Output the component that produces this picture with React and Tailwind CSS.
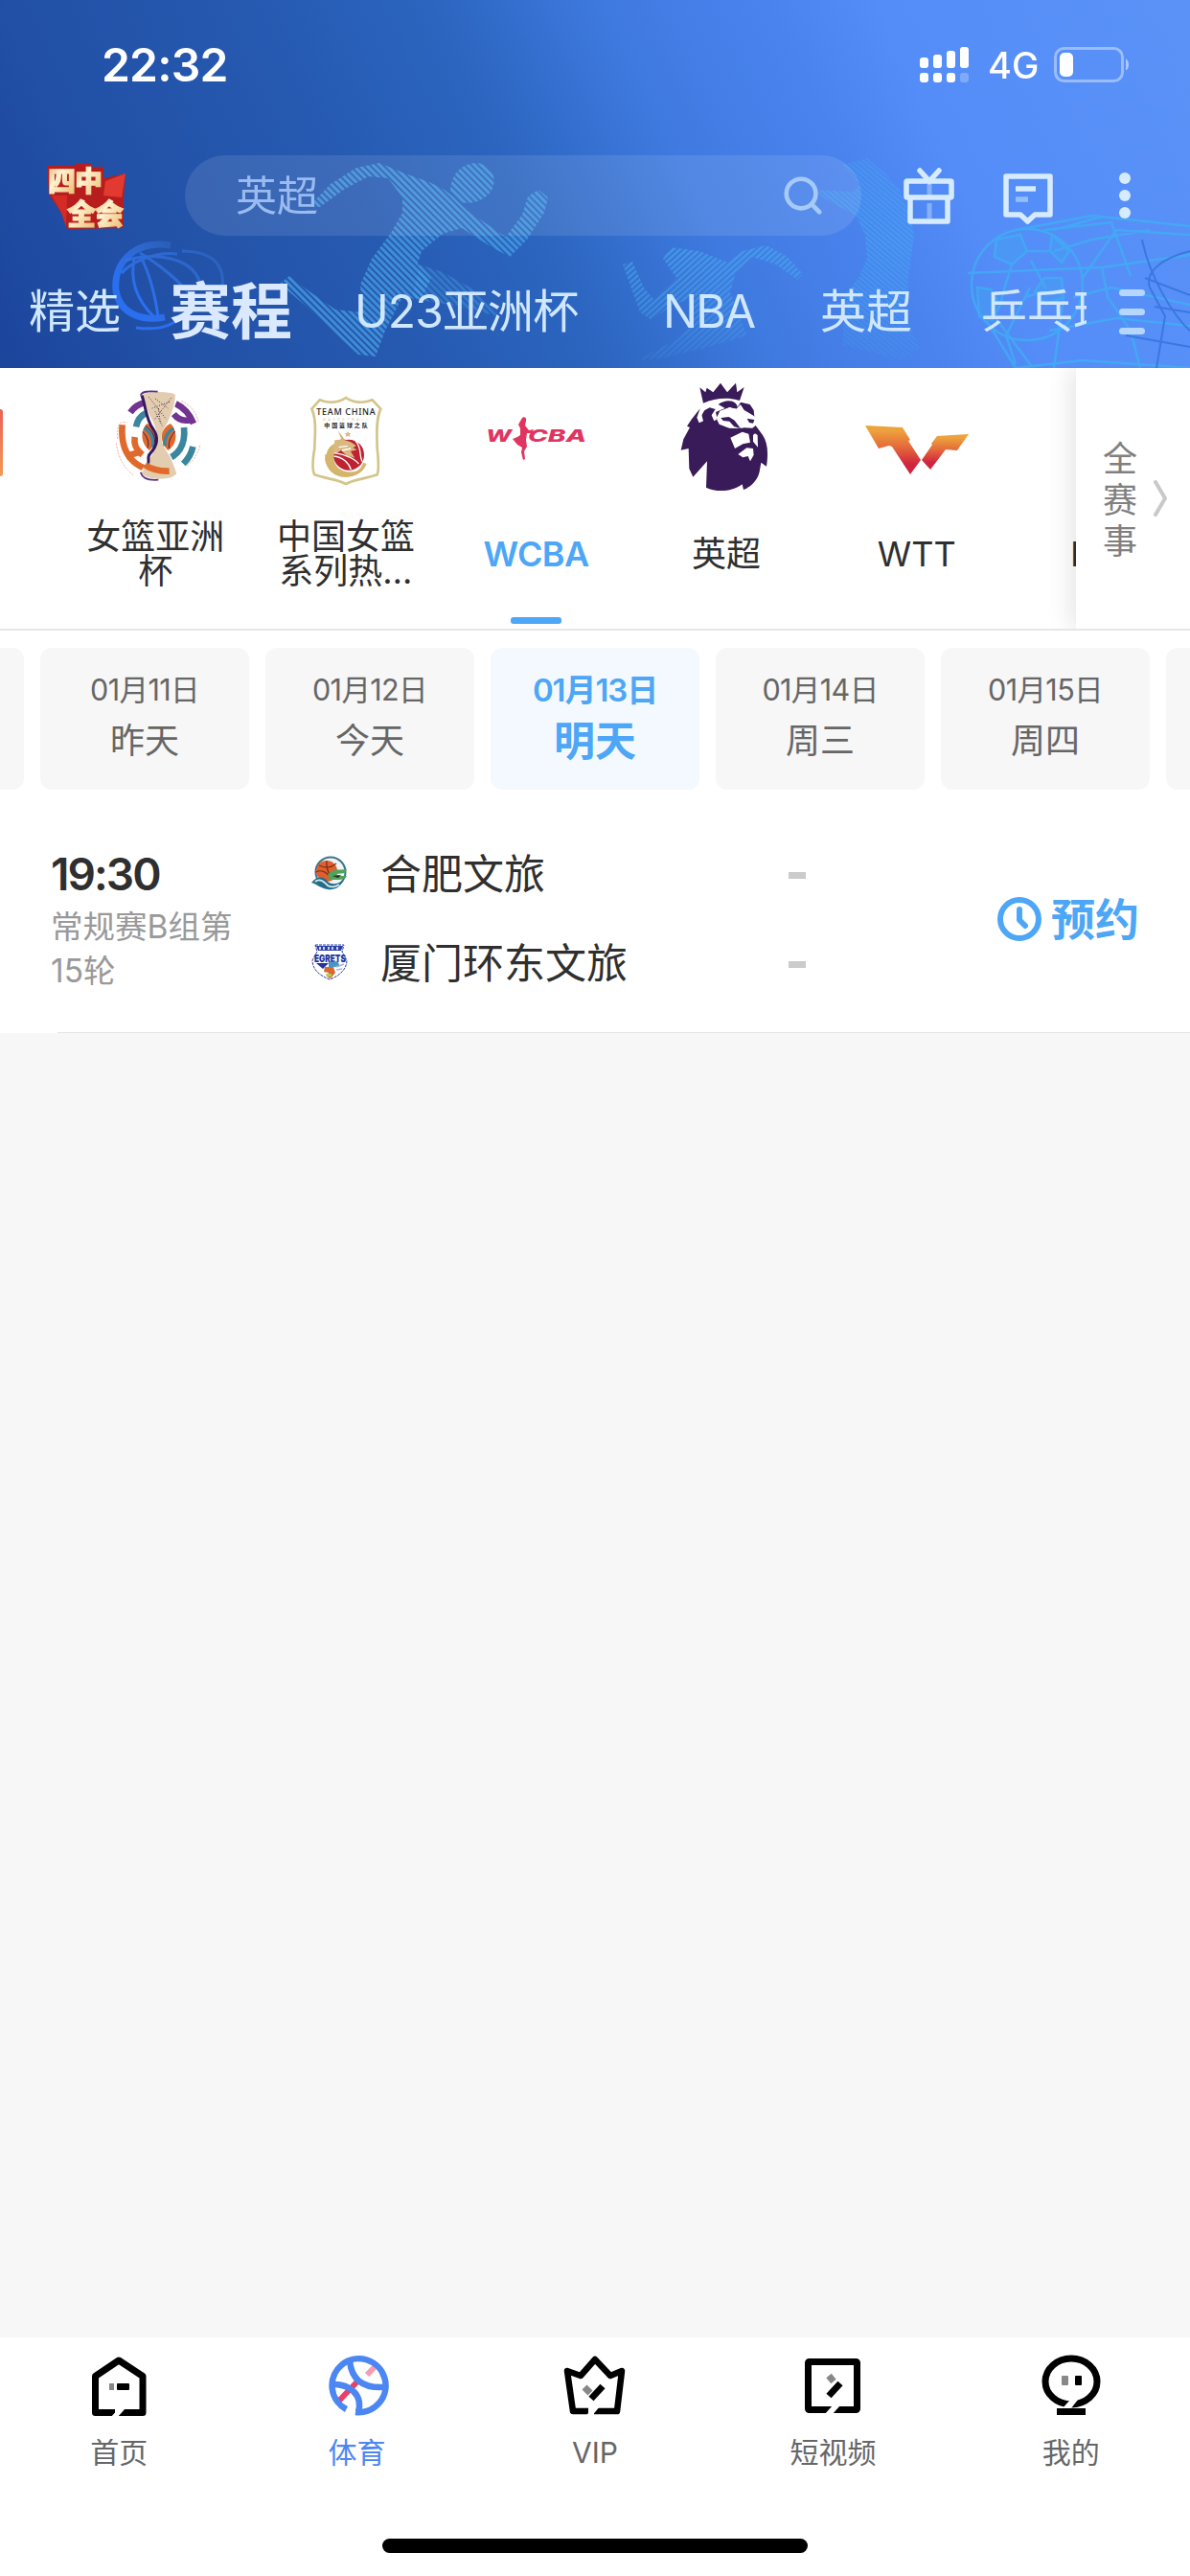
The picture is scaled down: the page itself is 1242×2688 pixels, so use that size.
import { Search } from "lucide-react";

const leagues = [
  { id: "asia", lines: ["女篮亚洲", "杯"], Logo: AsiaCupLogo },
  { id: "china", lines: ["中国女篮", "系列热…"], Logo: TeamChinaLogo },
  { id: "wcba", lines: ["WCBA"], Logo: WcbaLogo, active: true },
  { id: "epl", lines: ["英超"], Logo: LionLogo },
  { id: "wtt", lines: ["WTT"], Logo: WttLogo },
];

const days = [
  { date: "01月11日", label: "昨天" },
  { date: "01月12日", label: "今天" },
  { date: "01月13日", label: "明天", active: true },
  { date: "01月14日", label: "周三" },
  { date: "01月15日", label: "周四" },
];

const teams = [
  { name: "合肥文旅", Badge: HefeiBadge },
  { name: "厦门环东文旅", Badge: XiamenBadge },
];

const navItems = [
  { label: "首页", Icon: HomeIcon },
  { label: "体育", Icon: SportIcon, active: true },
  { label: "VIP", Icon: VipIcon },
  { label: "短视频", Icon: ShortVideoIcon },
  { label: "我的", Icon: MineIcon },
];

function HeaderArt() {
  return (
    <svg className="absolute inset-0" width="1242" height="384" viewBox="0 0 1242 384" fill="none">
      <defs>
        <pattern id="down" width="8" height="5" patternUnits="userSpaceOnUse" patternTransform="rotate(45)">
          <rect width="8" height="3" fill="#4aa9ea" />
        </pattern>
        <pattern id="up" width="8" height="4.6" patternUnits="userSpaceOnUse" patternTransform="rotate(-42)">
          <rect width="8" height="2.6" fill="#46a6ee" />
        </pattern>
        <pattern id="fine" width="8" height="4" patternUnits="userSpaceOnUse" patternTransform="rotate(40)">
          <rect width="8" height="2.4" fill="#43a5f2" />
        </pattern>
        <linearGradient id="ballFade" x1="0" y1="1" x2="1" y2="0">
          <stop offset="0.3" stopColor="#2a6ff0" />
          <stop offset="1" stopColor="#3f80e8" stopOpacity="0.25" />
        </linearGradient>
        <linearGradient id="fade" x1="0" y1="165" x2="0" y2="380" gradientUnits="userSpaceOnUse">
          <stop offset="0" stopColor="#fff" stopOpacity="0.55" />
          <stop offset="0.4" stopColor="#fff" stopOpacity="0.85" />
          <stop offset="0.7" stopColor="#fff" stopOpacity="0.6" />
          <stop offset="1" stopColor="#fff" stopOpacity="0.15" />
        </linearGradient>
        <mask id="fadeMask" maskUnits="userSpaceOnUse" x="560" y="150" width="420" height="234">
          <rect x="560" y="150" width="420" height="234" fill="url(#fade)" />
        </mask>
      </defs>

      {/* basketball */}
      <g stroke="url(#ballFade)" strokeWidth="3">
        <path d="M178 256C140 250 118 275 121 303C124 325 145 336 172 331" strokeWidth="7" />
        <path d="M131 272C160 262 205 268 210 300M146 264C165 275 190 295 200 310M140 270C136 290 140 310 160 330M148 270C158 290 162 310 165 330M127 285C135 275 160 262 185 265M190 262C220 262 235 275 232 300M142 342C165 345 180 340 190 330" />
      </g>

      {/* runner */}
      <g fill="url(#down)" opacity="0.65">
        <path d="M322 216L345 192L372 175L396 170L420 180L448 190L462 197C475 205 480 214 492 223L528 247L545 224L551 205L562 198L572 206L568 222L550 250L532 268L510 256L482 238L462 244L440 262L436 275L450 290L440 312L420 310L402 345L392 372L374 370L350 348L320 320L292 296L302 288L320 302L350 323L378 326L376 297L388 270L408 243L420 222L420 206L405 186L385 184L360 197L334 216Z" />
        <path d="M470 200C470 182 482 170 498 170C512 172 519 184 514 197C508 208 494 214 480 211Z" />
      </g>
      <path d="M438 276L462 284L498 304L520 330L470 318L430 312Z" fill="url(#down)" opacity="0.35" />

      {/* second player */}
      <g mask="url(#fadeMask)">
        <g fill="url(#up)" opacity="0.85">
          <path d="M650 276L660 273L672 300L682 312L706 290L692 270L700 258L730 262L760 274L775 262L800 256L822 268L838 286L832 292L810 276L785 268L768 284L762 305L770 325L780 350L740 362L690 374L665 376L710 352L725 330L720 312L702 318L680 334L668 326Z" />
        </g>
        {/* tennis player */}
        <path d="M878 172L905 165L925 182L938 196L950 225L954 245L948 290L946 330L960 365L940 375L880 360L880 310L896 290L905 270L903 245L893 225L862 208L850 198L890 200L898 192Z" fill="url(#fine)" opacity="0.8" />
      </g>

      {/* football and net */}
      <g stroke="#3fb0f4" strokeWidth="2.5" opacity="0.75">
        <circle cx="1072" cy="297" r="58" />
        <path d="M1040 250L1065 245L1072 262L1056 276L1038 268Z M1090 290L1108 290L1110 310L1092 318L1080 304Z M1098 245L1116 262L1108 274L1096 262ZM1020 300L1034 302L1044 318L1036 334L1022 330Z" fill="#3fa8f4" fillOpacity="0.5" />
        <path d="M1010 285L1150 279L1242 266M1072 262L1096 262M1056 276L1048 302L1044 318M1070 310L1090 304M1030 335L1060 384L1130 376L1242 384M1038 330L1078 384M1075 300L1050 350L1060 380M1110 310L1100 384M1120 310L1160 300L1242 318M1060 240L1140 225L1242 236M1090 240L1160 232L1180 288M1130 290L1165 240L1242 245M1150 279L1156 310L1180 345L1190 384M1100 262L1140 250L1200 240M1095 345L1165 332L1242 340M1076 272L1092 302M1100 240L1150 226" />
      </g>
      <path d="M1242 262C1210 270 1195 285 1200 300L1216 330L1207 384M1205 320L1242 326M1195 290L1242 308M1175 350L1242 362M1192 250C1200 290 1225 330 1242 345" stroke="#3471dc" strokeWidth="2" opacity="0.8" />
    </svg>
  );
}

function StatusBar() {
  return (
    <div className="flex h-[135px] items-center justify-between pl-[106px] pr-[62px] text-white">
      <div className="text-[48px] font-semibold leading-none tracking-[-0.8px]">22:32</div>
      <div className="flex items-center">
        <svg width="52" height="38" viewBox="0 0 52 38" fill="#fff">
          <rect x="0" y="11" width="9" height="11" rx="3" />
          <rect x="14" y="8" width="9" height="14" rx="3" />
          <rect x="28" y="4" width="9" height="18" rx="3" />
          <rect x="42" y="0" width="9" height="22" rx="3" />
          <rect x="0" y="27" width="9" height="10" rx="3" />
          <rect x="14" y="27" width="9" height="10" rx="3" />
          <rect x="28" y="27" width="9" height="10" rx="3" />
          <rect x="42" y="27" width="9" height="10" rx="3" opacity="0.25" />
        </svg>
        <span className="ml-[19px] w-[52px] text-[38px] font-medium leading-none">4G</span>
        <svg className="ml-[17px]" width="80" height="38" viewBox="0 0 80 38">
          <rect x="1.5" y="1.5" width="70" height="34" rx="9" fill="none" stroke="#fff" strokeOpacity="0.4" strokeWidth="3" />
          <rect x="6" y="6" width="14" height="25" rx="5" fill="#fff" />
          <path d="M75 12.500C79 14 79 23 75 24.500Z" fill="#fff" opacity="0.5" />
        </svg>
      </div>
    </div>
  );
}

function CampaignLogo() {
  return (
    <svg width="100" height="85" viewBox="0 0 100 85">
      <defs>
        <linearGradient id="gold" x1="0" y1="0" x2="1" y2="1">
          <stop offset="0" stopColor="#d9a55c" />
          <stop offset="0.4" stopColor="#fff3cf" />
          <stop offset="1" stopColor="#e9b566" />
        </linearGradient>
      </defs>
      <path d="M9 11H39V9H56V12H68V24L91 19L89 46V76L30 77L24 60L11 41Z" fill="#b81d1d" />
      <path d="M70 27L91 19L87 44L68 42Z" fill="#e23a30" />
      <path d="M14 42L30 42L29 74L24 60Z" fill="#d42c24" />
      <g fontFamily="Noto Sans CJK SC" fontWeight="900" fill="url(#gold)" stroke="url(#gold)" strokeWidth="1.200">
        <text x="10" y="38" fontSize="29">四</text>
        <text x="38" y="38" fontSize="29">中</text>
        <text x="30" y="72" fontSize="30">全</text>
        <text x="59" y="72" fontSize="30">会</text>
      </g>
    </svg>
  );
}

function SearchRow() {
  return (
    <div className="flex h-[138px] items-center pl-[40px]">
      <CampaignLogo />
      <div className="ml-[53px] flex h-[84px] w-[706px] items-center justify-between rounded-full bg-white/10 pl-[53px] pr-[38px]">
        <span className="text-[43px] leading-none text-[#99bbef]">英超</span>
        <Search className="size-[46px] text-[#a5caf8]" strokeWidth={2.4} />
      </div>
      <svg className="ml-[43px]" width="56" height="60" viewBox="0 0 56 60" fill="none" stroke="#d6ebff" strokeWidth="5.500">
        <path d="M18 4L28 15L38 4" strokeLinecap="round" />
        <rect x="4" y="15" width="47" height="17" rx="1" />
        <path d="M8 32V57H47V32" strokeLinejoin="round" />
        <path d="M28 18V30M28 38V54" strokeOpacity="0.4" strokeWidth="5" />
      </svg>
      <svg className="ml-[46px]" width="58" height="60" viewBox="0 0 58 60" fill="none" stroke="#d6ebff" strokeWidth="5.500">
        <path d="M6 10H52V50H36L28.500 57L21 50H6Z" strokeLinejoin="round" />
        <path d="M16 23H37" />
        <path d="M16 34H29" strokeOpacity="0.5" />
      </svg>
      <div className="ml-[66px] flex flex-col gap-[6px]">
        <span className="size-[12px] rounded-full bg-[#d6ebff]" />
        <span className="size-[12px] rounded-full bg-[#d6ebff]" />
        <span className="size-[12px] rounded-full bg-[#d6ebff]" />
      </div>
    </div>
  );
}

function ChannelTabs() {
  return (
    <div className="flex h-[104px] items-center text-[48px] leading-none whitespace-nowrap text-[#cfe7ff]">
      <div className="flex w-[1134px] items-center overflow-hidden py-5 pl-[30px]">
        <span className="w-[147px] shrink-0">精选</span>
        <span className="w-[192px] shrink-0 text-[64px] font-bold text-[#dbe9ff]">赛程</span>
        <span className="w-[323px] shrink-0 pl-px tracking-[-0.9px]">U23亚洲杯</span>
        <span className="w-[164px] shrink-0 tracking-[-1.8px]">NBA</span>
        <span className="w-[168px] shrink-0">英超</span>
        <span className="shrink-0">乒乓球</span>
      </div>
      <div className="ml-[34px] flex flex-col gap-[13px]">
        <span className="h-[7px] w-[27px] rounded-full bg-[#b5d6fd]" />
        <span className="h-[7px] w-[27px] rounded-full bg-[#b5d6fd]" />
        <span className="h-[7px] w-[27px] rounded-full bg-[#b5d6fd]" />
      </div>
    </div>
  );
}

function AsiaCupLogo() {
  return (
    <svg width="100" height="115" viewBox="0 0 300 345" fill="none">
      <g strokeWidth="20">
        <path d="M72 103C84 86 100 76 118 72" stroke="#733491" />
        <path d="M214 76C240 88 258 108 270 138M208 108C222 126 240 132 262 126" stroke="#733491" />
        <path d="M90 148C94 128 104 114 120 106" stroke="#3a869f" />
        <path d="M240 150C246 205 222 242 176 252M268 210C264 230 254 248 238 264" stroke="#3a869f" />
        <path d="M47 142C40 225 75 290 190 288M86 180C82 205 90 220 110 236M58 240L106 226" stroke="#e06a2c" />
      </g>
      <path d="M32 185C30 135 40 130 62 135M28 200C35 245 50 275 85 302M250 270C280 245 290 215 290 205M232 68C262 80 280 105 286 135" stroke="#d98b6b" strokeWidth="2" strokeDasharray="6 4" />
      <ellipse cx="134" cy="180" rx="30" ry="46" fill="#fff" />
      <ellipse cx="191" cy="180" rx="30" ry="46" fill="#fff" />
      <path d="M108 48C120 34 195 34 215 46C214 85 196 130 176 160C168 180 172 205 190 228C204 250 212 272 219 295C205 318 125 320 104 294C125 262 140 235 152 205C158 180 152 155 140 130C122 100 114 75 108 48Z" fill="#e3cdb0" stroke="#fff" strokeWidth="4" />
      <path d="M124 138C104 158 102 198 132 222C150 205 158 180 150 160C144 150 136 142 124 138Z" fill="#e06a2c" />
      <path d="M198 138C218 158 224 198 190 222C172 205 166 180 174 162C180 150 188 142 198 138Z" fill="#e06a2c" />
      <path d="M115 152C138 164 148 190 142 212M208 154C190 162 176 184 180 208" stroke="#3a869f" strokeWidth="10" />
      <path d="M111 164C126 180 132 198 126 214M120 146C142 160 152 180 148 206M212 162C196 180 190 200 194 216" stroke="#37205f" strokeWidth="3" />
      <path d="M108 50C120 80 120 125 144 156C164 185 152 212 134 232C120 245 140 260 118 274" stroke="#37185f" strokeWidth="9" />
      <path d="M104 50C108 36 130 36 158 38M104 290C110 312 135 316 160 314" stroke="#5b3280" strokeWidth="5" />
      <path d="M118 268C136 280 160 288 194 287" stroke="#e06a2c" strokeWidth="20" />
      <path d="M130 55L185 125M200 58L148 125M150 60L190 90M195 70L140 90M160 90L166 135M150 100L172 145" stroke="#4a3040" strokeWidth="3" strokeDasharray="3 5" />
    </svg>
  );
}

function TeamChinaLogo() {
  return (
    <svg width="100" height="115" viewBox="610 0 300 345" fill="none">
      <path d="M760 57C735 75 700 74 678 64L653 92C670 130 662 180 662 215C655 255 655 285 662 298C700 312 735 312 760 327C785 312 820 312 858 298C865 280 862 250 858 215C858 180 852 130 869 92L843 64C820 74 785 75 760 57Z" stroke="#d3c58a" strokeWidth="8" />
      <text x="668" y="110" fontSize="27" fontFamily="Noto Sans" fontWeight="500" textLength="184" fill="#222">TEAM CHINA</text>
      <text x="688" y="128" fontSize="12" fontFamily="Noto Sans" textLength="142" fill="#d8cfae">BASKETBALL</text>
      <text x="692" y="151" fontSize="18" fontFamily="Noto Sans CJK SC" fontWeight="700" textLength="136" fill="#222">中国篮球之队</text>
      <path d="M766 161L769 168L776 168L771 173L773 180L766 176L759 180L761 173L756 168L763 168Z" fill="#e3b483" />
      <path d="M735 160L745 185L728 200C690 210 690 270 718 292C740 312 790 308 805 285L790 288C745 296 720 270 722 240L745 215L790 222L782 200L755 186Z" fill="#d3b56c" />
      <circle cx="769" cy="236" r="48" fill="#be2332" />
      <path d="M725 190C750 185 775 192 792 208L782 214L795 220L775 225L788 245L762 238L745 222L718 238Z" fill="#dab981" />
      <path d="M722 240C750 242 770 262 776 282M726 230C760 235 790 250 800 264M790 192C812 215 800 240 812 258M738 212L765 208M748 222L775 216" stroke="#fff" strokeWidth="4" />
      <path d="M700 235C694 270 725 304 765 300C795 298 812 282 820 262" stroke="#d3b56c" strokeWidth="10" />
    </svg>
  );
}

function WcbaLogo() {
  return (
    <svg width="110" height="115" viewBox="0 0 110 115">
      <g fill="#df3560" fontFamily="Inter" fontWeight="800" fontStyle="italic">
        <text x="3" y="65" fontSize="18" textLength="27" lengthAdjust="spacingAndGlyphs">W</text>
        <text x="47" y="65" fontSize="18" textLength="61" lengthAdjust="spacingAndGlyphs">CBA</text>
      </g>
      <path d="M41 40C43 38 46 40 45 43L44 48L48 53L53 52L51 56L46 56L45 63L46 70L43 75L44 83L42 84L40 76L41 71L36 68L31 62L36 60L39 58L39 51L37 47Z" fill="#df3560" />
    </svg>
  );
}

function LionLogo() {
  return (
    <svg className="mt-[6px]" width="120" height="125" viewBox="0 0 360 375">
      <path d="M97 31L115 46L119 32L139 46L162 17L183 46L210 17L214 46L236 30L222 72C185 60 145 64 108 80Z" fill="#381b58" />
      <path d="M98 97L88 125L95 142L108 136L103 118L112 102L128 94L146 99L134 118L142 136L152 130L147 108L176 96L155 84C180 66 210 70 215 92L225 77L254 84L266 102L268 122L252 112L230 100L224 84L212 98L190 94L160 104L149 128L158 146L190 158L218 158L236 157L262 158L272 150L294 180C310 205 312 235 306 278L289 266L284 295C278 322 258 342 234 351L230 334C195 360 145 358 117 344L120 262L76 311L64 285L62 222L38 227L46 193L66 156L57 152L72 130Z" fill="#381b58" />
      <path d="M150 126L162 106L190 93L212 98L226 86L236 102L266 120L270 140L252 144L246 132L255 150L228 158L202 136L190 124L166 126L170 135L190 140L214 160L184 156L158 144Z" fill="#fff" />
      <path d="M163 126L188 123L206 134L224 158L205 154L190 137L170 135ZM245 128L268 132L264 143L252 141Z" fill="#381b58" />
      <path d="M193 188L230 170L250 176L255 203L232 208L207 222ZM270 175L278 180L279 218L264 200L264 180ZM217 240L244 220L264 222L266 242L255 262L248 246L232 250Z" fill="#fff" />
      <path d="M103 137C92 115 104 98 124 91" stroke="#fff" strokeWidth="8" fill="none" />
    </svg>
  );
}

function WttLogo() {
  return (
    <svg width="110" height="115" viewBox="0 0 110 115">
      <defs>
        <linearGradient id="wtt" x1="0" y1="0" x2="0" y2="1">
          <stop offset="0.1" stopColor="#eda33c" />
          <stop offset="0.45" stopColor="#e4683a" />
          <stop offset="0.8" stopColor="#cf2440" />
        </linearGradient>
      </defs>
      <path d="M1 48L40 50L48 63L46 64L59 84L48 99L29 70L26 69L15 72Z" fill="url(#wtt)" />
      <path d="M109 57L97 74L85 73L69 94L60 84L71 68L70 67L76 59Z" fill="url(#wtt)" />
    </svg>
  );
}

function LeagueBar() {
  return (
    <div className="flex h-[274px] overflow-hidden border-b-2 border-[#e6e6e6] bg-white">
      <div className="flex w-[1123px] shrink-0 overflow-hidden">
        <div className="mt-[43px] h-[70px] w-[3px] shrink-0 rounded-r bg-gradient-to-b from-[#ec5f58] to-[#f09a52]" />
        <div className="w-[60px] shrink-0" />
        {leagues.map(({ id, lines, Logo, active }) => (
          <div key={id} className="flex w-[198.600px] shrink-0 flex-col items-center">
            <div className="mt-[7px] flex h-[125px] items-center justify-center">
              <Logo />
            </div>
            <div
              className={`mt-[25px] flex h-[74px] flex-col items-center justify-center text-[36px] leading-[36px] ${
                active ? "font-semibold tracking-[-0.6px] text-[#4da6f6]" : "text-[#2f2f2f]"
              }`}
            >
              {lines.map((line) => (
                <span key={line}>{line}</span>
              ))}
            </div>
            {active && <div className="mt-[29px] h-[7px] w-[53px] rounded-[3px] bg-[#4da6f6]" />}
          </div>
        ))}
        <div className="mt-[157px] flex h-[74px] shrink-0 items-center pl-[61px] text-[36px] text-[#2f2f2f]">NBA</div>
      </div>
      <div className="relative flex w-[119px] shrink-0 items-center bg-white pl-[28px] shadow-[-6px_0_24px_rgba(0,0,0,0.1)]">
        <div className="flex w-9 flex-col pt-[4px] text-[36px] leading-[43px] text-[#808080]">
          <span>全</span>
          <span>赛</span>
          <span>事</span>
        </div>
        <svg className="ml-[15px]" width="18" height="40" viewBox="0 0 18 40" fill="none">
          <path d="M4 3L14 20L4 37" stroke="#c9c9c9" strokeWidth="4" strokeLinecap="round" strokeLinejoin="round" />
        </svg>
      </div>
    </div>
  );
}

function DateBar() {
  return (
    <div className="flex h-[184px] gap-[17px] overflow-hidden bg-white pt-[18px]">
      <div className="h-[148px] w-[25px] shrink-0 rounded-r-[12px] bg-[#f7f7f7]" />
      {days.map((day) => (
        <div
          key={day.date}
          className={`flex h-[148px] w-[218px] shrink-0 flex-col items-center rounded-[12px] ${
            day.active ? "bg-[#f3f9ff] font-bold text-[#4da6f6]" : "bg-[#f7f7f7] text-[#666]"
          }`}
        >
          <div className={`mt-[24px] h-[40px] leading-[40px] ${day.active ? "text-[33px] font-semibold tracking-[-1.1px]" : "text-[30.500px] tracking-[-0.6px]"}`}>
            {day.date}
          </div>
          <div className={`mt-[9px] h-[48px] leading-[48px] ${day.active ? "text-[43px]" : "text-[36px]"}`}>
            {day.label}
          </div>
        </div>
      ))}
      <div className="h-[148px] w-[25px] shrink-0 rounded-l-[12px] bg-[#f7f7f7]" />
    </div>
  );
}

function HefeiBadge() {
  return (
    <svg width="38" height="38" viewBox="0 0 38 38" fill="none">
      <circle cx="20" cy="18" r="15.500" fill="#eef5f4" stroke="#39758c" strokeWidth="2" />
      <circle cx="16" cy="17" r="11" fill="#e0602d" />
      <path d="M8 11C14 14 20 14 26 9M16 6C15 12 18 20 22 26M5 18C10 15 16 18 18 22" stroke="#7d2c1c" strokeWidth="1.200" />
      <path d="M17 21C22 14 29 16 37 15L35 19L26 20L29 22L37 22C35 27 25 26 19 26Z" fill="#4fa35a" />
      <path d="M22 22L31 21L28 24Z" fill="#1c2b24" />
      <path d="M0 29C6 22 13 22 17 28C22 32 28 30 33 27C30 34 24 37 17 36C10 35 6 31 0 29Z" fill="#256d8a" />
      <path d="M4 28C9 24 13 28 17 32C20 34 25 34 29 31" stroke="#d7ecef" strokeWidth="1.800" />
    </svg>
  );
}

function XiamenBadge() {
  return (
    <svg width="38" height="38" viewBox="0 0 38 38" fill="none">
      <path d="M4 1H34L32 8L37 17C37 27 28 34 19 37C9 33 1 27 1 17L6 8Z" fill="#fff" stroke="#2b3b9d" strokeWidth="1" strokeDasharray="3 1" />
      <path d="M5 2L33 2L31 7L7 7Z" fill="#2940a8" />
      <path d="M9 3V6M13 3V6M18 3V6M22 3V6M27 3V6" stroke="#fff" strokeWidth="1.500" />
      <text x="3" y="18.500" fontSize="10.500" fontFamily="Inter" fontWeight="900" textLength="33" lengthAdjust="spacingAndGlyphs" fill="#23349b">EGRETS</text>
      <path d="M5 20L18 20L12 26Z" fill="#23349b" />
      <path d="M18 19L27 18L30 23L18 25Z" fill="#4b95c6" />
      <path d="M14 24L23 24L25 30L20 36L16 34L18 30L13 29Z" fill="#d76a32" />
      <path d="M26 24L34 21M26 27L32 26M16 32L21 33" stroke="#a3b6d8" strokeWidth="1.500" />
      <path d="M15 31H21V34H16Z" fill="#b8c94d" />
    </svg>
  );
}

function MatchRow() {
  return (
    <div className="flex h-[235px] bg-white">
      <div className="flex w-[270px] flex-col pt-[45px] pl-[53px]">
        <div className="text-[46px] leading-[50px] font-semibold tracking-[-1.9px] text-[#2f2f2f]">19:30</div>
        <div className="mt-[7px] text-[33.500px] leading-[46px] whitespace-nowrap text-[#999]">
          常规赛B组第
          <br />
          15轮
        </div>
      </div>
      <div className="flex w-[680px] flex-col pt-[45px] pl-[55px]">
        {teams.map(({ name, Badge }) => (
          <div key={name} className="flex h-[93px] items-start">
            <div className="pt-[5px]">
              <Badge />
            </div>
            <div className="ml-[34px] w-[426px] text-[43px] leading-[50px] text-[#2f2f2f]">{name}</div>
            <div className="mt-[23px] h-[7px] w-[18px] bg-[#cbcbcb]" />
          </div>
        ))}
      </div>
      <div className="flex flex-1 items-center pb-[2px] pl-[91px] text-[#4da6f6]">
        <svg width="46" height="46" viewBox="0 0 46 46" fill="none" stroke="currentColor" strokeWidth="6">
          <circle cx="23" cy="23" r="20" />
          <path d="M23 13V24L29 30" strokeLinecap="round" strokeLinejoin="round" />
        </svg>
        <span className="ml-[10px] text-[46px] leading-none font-bold">预约</span>
      </div>
    </div>
  );
}

function HomeIcon() {
  return (
    <svg width="66" height="66" viewBox="0 0 66 66" fill="none" stroke="#000" strokeWidth="7" strokeLinejoin="round">
      <path d="M29 60.500H8.500V22.500L33 6L58 22.500V60.500H33" />
      <path d="M24 66L33 56H40L31 66Z" fill="#fff" stroke="none" />
      <rect x="23" y="30" width="5" height="7" fill="#888" stroke="none" />
      <rect x="31" y="30" width="13" height="7" rx="1" fill="#000" stroke="none" />
    </svg>
  );
}

function SportIcon() {
  return (
    <svg width="66" height="66" viewBox="0 0 66 66" fill="none" stroke="#4b86f2" strokeWidth="6.500">
      <path d="M13 49L35 26" stroke="#ee3f66" strokeWidth="6" />
      <path d="M43 21L51 13" stroke="#f79bb2" strokeWidth="6" />
      <path d="M21.500 57A28 28 0 1 1 31 60" />
      <path d="M25 7C27 24 36 35 60 34M6 31C25 30 39 42 34 60" />
    </svg>
  );
}

function VipIcon() {
  return (
    <svg width="70" height="66" viewBox="0 0 70 66" fill="none" stroke="#000" strokeWidth="6.500" strokeLinejoin="round">
      <path d="M28 59H12L6 17L20 22L35 5L51 22L63 17L58 59H34" />
      <path d="M25 65L33 54H40L31 65Z" fill="#fff" stroke="none" />
      <path d="M24 34L30 40" stroke="#888" strokeWidth="7" />
      <path d="M31 46L43 33" strokeWidth="7" />
    </svg>
  );
}

function ShortVideoIcon() {
  return (
    <svg width="66" height="66" viewBox="0 0 66 66" fill="none" stroke="#000" strokeWidth="7" strokeLinejoin="round">
      <rect x="7.500" y="7.500" width="51" height="50" rx="1" />
      <path d="M24 63L33 53H41L32 63Z" fill="#fff" stroke="none" />
      <path d="M29 22L34 28" stroke="#888" strokeWidth="7" />
      <path d="M29 43L41 30" strokeWidth="7" />
    </svg>
  );
}

function MineIcon() {
  return (
    <svg width="66" height="66" viewBox="0 0 66 66" fill="none" stroke="#000" strokeWidth="7">
      <ellipse cx="33" cy="28" rx="27" ry="24" />
      <path d="M24 56L32 47H40L33 56Z" fill="#fff" stroke="none" />
      <path d="M18 59.500H48" />
      <rect x="23" y="22" width="7" height="10" rx="1" fill="#888" stroke="none" />
      <rect x="37" y="22" width="7" height="10" rx="1" fill="#000" stroke="none" />
    </svg>
  );
}

function BottomNav() {
  return (
    <div className="flex h-[249px] shrink-0 flex-col items-center justify-between bg-white pb-[24px]">
      <div className="grid w-full grid-cols-5 pt-[18px]">
        {navItems.map(({ label, Icon, active }) => (
          <div key={label} className="flex flex-col items-center">
            <Icon />
            <span
              className={`mt-[16px] text-[30px] leading-[40px] ${
                active ? "text-[#4b86f2]" : "text-[#666]"
              }`}
            >
              {label}
            </span>
          </div>
        ))}
      </div>
      <div className="h-[15px] w-[444px] rounded-full bg-black" />
    </div>
  );
}

export default function App() {
  return (
    <div className="flex h-[2688px] w-[1242px] flex-col overflow-hidden bg-[#f7f7f7] font-['Inter','Noto_Sans_CJK_SC',sans-serif]">
      <header className="relative h-[384px] shrink-0 overflow-hidden bg-[linear-gradient(65deg,#1c459c_0%,#2150a6_13%,#2659b0_30%,#2b65bf_44%,#3f7ae0_57%,#4a83ee_69%,#548df8_77%,#5a92f7_100%)]">
        <HeaderArt />
        <div className="relative">
          <StatusBar />
          <SearchRow />
          <ChannelTabs />
        </div>
      </header>
      <LeagueBar />
      <DateBar />
      <MatchRow />
      <div className="bg-white pl-[60px]">
        <div className="h-px bg-[#e3e3e3]" />
      </div>
      <main className="flex-1" />
      <BottomNav />
    </div>
  );
}
